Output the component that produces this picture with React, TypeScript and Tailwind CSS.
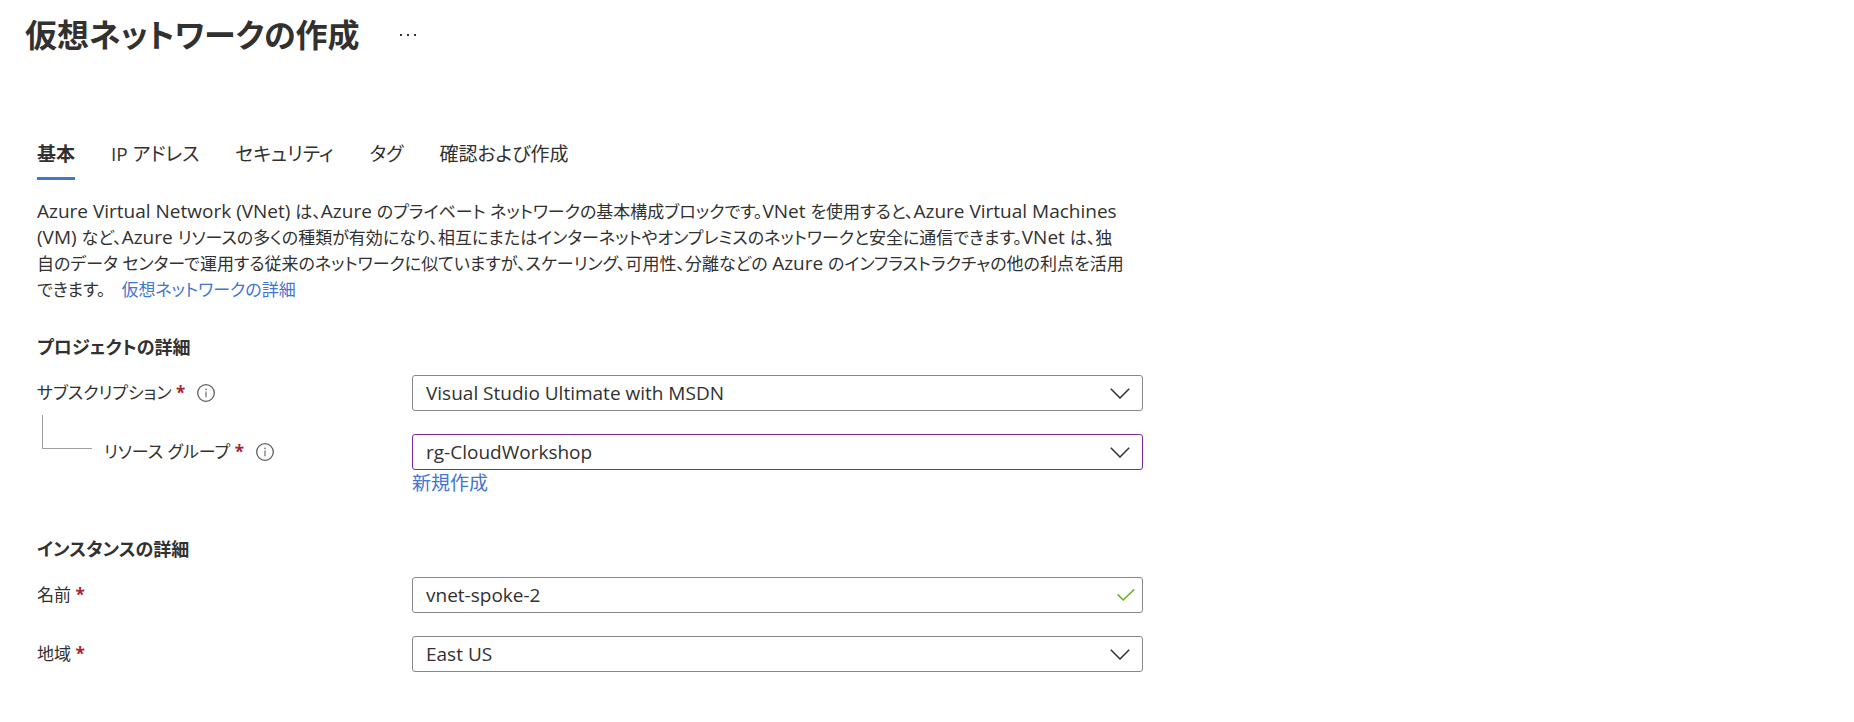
import React, { useState } from 'react';
import type { ReactNode } from 'react';

const tabs = ['基本', 'IP アドレス', 'セキュリティ', 'タグ', '確認および作成'];

function InfoIcon() {
  return (
    <svg width="18" height="18" viewBox="0 0 18 18" fill="none" aria-hidden="true">
      <circle cx="9" cy="9" r="8.3" stroke="#605e5c" strokeWidth="1.3" />
      <path d="M9 7.6v5.6" stroke="#7a7876" strokeWidth="1.3" />
      <circle cx="9" cy="5.3" r="0.9" fill="#7a7876" />
    </svg>
  );
}

function Chevron() {
  return (
    <svg
      className="pointer-events-none absolute top-3 right-3"
      width="22"
      height="12"
      viewBox="0 0 22 12"
      fill="none"
      aria-hidden="true"
    >
      <path d="M1.8 1.8 11 11l9.2-9.2" stroke="#323130" strokeWidth="1.5" />
    </svg>
  );
}

/* Latin words are set slightly larger than the Japanese text around them. */
function Latin({ children }: { children: ReactNode }) {
  return <span className="text-[19px] leading-none">{children}</span>;
}

function Label({ id, text, info = false, nested = false }: { id: string; text: string; info?: boolean; nested?: boolean }) {
  return (
    <div className="flex h-9 items-center">
      {nested && <span className="mr-3 mb-10 ml-[5px] h-[34px] w-[50px] shrink-0 border-b border-l border-[#a19f9d]" />}
      <label htmlFor={id}>
        {text} <span className="font-bold text-[#a4262c]">*</span>
      </label>
      {info && (
        <button type="button" aria-label={`${text}の情報`} className="ml-3">
          <InfoIcon />
        </button>
      )}
    </div>
  );
}

function Dropdown({ id, value, changed = false }: { id: string; value: string; changed?: boolean }) {
  return (
    <div className="relative">
      <select
        id={id}
        className={`block h-9 w-full appearance-none rounded-[3px] border bg-white pr-10 pl-[13px] text-[19px] outline-none ${
          changed ? 'border-[#7a2ba0]' : 'border-[#8a8886]'
        }`}
      >
        <option>{value}</option>
      </select>
      <Chevron />
    </div>
  );
}

const row = 'grid grid-cols-[375px_minmax(0,1fr)]';

export default function App() {
  const [active, setActive] = useState(0);
  const [name, setName] = useState('vnet-spoke-2');

  return (
    <main className="bg-white pb-12 font-['Open_Sans','Noto_Sans_CJK_JP',sans-serif] text-[17px] leading-[26px] text-[#323130] [font-feature-settings:'palt']">
      <header className="flex items-center gap-10 px-[25px] pt-3">
        <h1 className="text-[32px] leading-[46px] font-bold">仮想ネットワークの作成</h1>
        <button type="button" aria-label="その他" className="flex gap-[5px]">
          <span className="size-[2px] bg-[#323130]" />
          <span className="size-[2px] bg-[#323130]" />
          <span className="size-[2px] bg-[#323130]" />
        </button>
      </header>

      <div className="max-w-[1143px] pl-[37px]">
        <nav className="mt-20 flex gap-9 text-[19px]" role="tablist">
          {tabs.map((t, i) => (
            <button
              key={t}
              type="button"
              role="tab"
              aria-selected={i === active}
              onClick={() => setActive(i)}
              className={`h-[42px] border-b-3 pb-2 ${
                i === active ? 'border-[#4376d0] font-bold' : 'border-transparent'
              }`}
            >
              {t}
            </button>
          ))}
        </nav>

        <p className="mt-[19px]">
          <Latin>Azure Virtual Network (VNet) </Latin>は、<Latin>Azure </Latin>
          のプライベート ネットワークの基本構成ブロックです。<Latin>VNet </Latin>を使用すると、
          <Latin>Azure Virtual Machines</Latin>
          <br />
          <Latin>(VM) </Latin>など、<Latin>Azure </Latin>
          リソースの多くの種類が有効になり、相互にまたはインターネットやオンプレミスのネットワークと安全に通信できます。<Latin>VNet </Latin>は、独
          <br />
          自のデータ センターで運用する従来のネットワークに似ていますが、スケーリング、可用性、分離などの <Latin>Azure </Latin>
          のインフラストラクチャの他の利点を活用
          <br />
          できます。
          <a href="#details" className="ml-4 text-[#4376d0]">
            仮想ネットワークの詳細
          </a>
        </p>

        <section>
          <h2 className="mt-[31px] mb-[15px] text-[18px] font-bold">プロジェクトの詳細</h2>
          <div className={row}>
            <Label id="subscription" text="サブスクリプション" info />
            <Dropdown id="subscription" value="Visual Studio Ultimate with MSDN" />
          </div>
          <div className={`${row} mt-[23px]`}>
            <Label id="group" text="リソース グループ" info nested />
            <div>
              <Dropdown id="group" value="rg-CloudWorkshop" changed />
              <a href="#new" className="block text-[19px] text-[#4376d0]">
                新規作成
              </a>
            </div>
          </div>
        </section>

        <section>
          <h2 className="mt-10 mb-[15px] text-[18px] font-bold">インスタンスの詳細</h2>
          <div className={row}>
            <Label id="name" text="名前" />
            <div className="relative">
              <input
                id="name"
                type="text"
                value={name}
                onChange={(e) => setName(e.target.value)}
                className="block h-9 w-full rounded-[3px] border border-[#8a8886] bg-white pr-10 pl-[13px] text-[19px] outline-none"
              />
              <svg
                className="pointer-events-none absolute top-3 right-2"
                width="18"
                height="12"
                viewBox="0 0 18 12"
                fill="none"
                aria-hidden="true"
              >
                <path d="M0.6 5.4 6.2 11 17.2 0.4" stroke="#6bb124" strokeWidth="1.5" />
              </svg>
            </div>
          </div>
          <div className={`${row} mt-[23px]`}>
            <Label id="region" text="地域" />
            <Dropdown id="region" value="East US" />
          </div>
        </section>
      </div>
    </main>
  );
}
